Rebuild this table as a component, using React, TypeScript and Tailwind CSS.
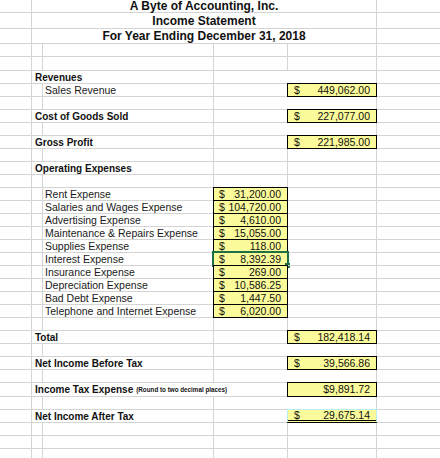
import clsx from 'clsx';

type Amount = { value: string; dollar?: boolean };

type SheetRow = {
  h?: number;
  label?: string;
  sub?: string;
  note?: string;
  d?: Amount;
  e?: Amount;
  selected?: boolean;
  final?: boolean;
  hideDE?: boolean;
};

const rows: SheetRow[] = [
  {},
  { h: 14 },
  { label: 'Revenues', hideDE: true },
  { sub: 'Sales Revenue', e: { value: '449,062.00' } },
  { hideDE: true },
  { label: 'Cost of Goods Sold', e: { value: '227,077.00' } },
  { hideDE: true },
  { label: 'Gross Profit', e: { value: '221,985.00' } },
  {},
  { label: 'Operating Expenses' },
  {},
  { sub: 'Rent Expense', d: { value: '31,200.00' } },
  { sub: 'Salaries and Wages Expense', d: { value: '104,720.00' } },
  { sub: 'Advertising Expense', d: { value: '4,610.00' } },
  { sub: 'Maintenance & Repairs Expense', d: { value: '15,055.00' } },
  { sub: 'Supplies Expense', d: { value: '118.00' } },
  { sub: 'Interest Expense', d: { value: '8,392.39' }, selected: true },
  { sub: 'Insurance Expense', d: { value: '269.00' } },
  { sub: 'Depreciation Expense', d: { value: '10,586.25' } },
  { sub: 'Bad Debt Expense', d: { value: '1,447.50' } },
  { sub: 'Telephone and Internet Expense', d: { value: '6,020.00' } },
  {},
  { label: 'Total', e: { value: '182,418.14' } },
  { hideDE: true },
  { label: 'Net Income Before Tax', e: { value: '39,566.86' } },
  { hideDE: true },
  {
    h: 14,
    label: 'Income Tax Expense',
    note: '(Round to two decimal places)',
    e: { value: '$9,891.72', dollar: false },
  },
  { hideDE: true },
  { label: 'Net Income After Tax', e: { value: '29,675.14' }, final: true },
  {},
  {},
  {},
];

const line = 'border-[#d4d4d4]';

const Money = ({ amount, className }: { amount: Amount; className: string }) => (
  <div className={clsx('flex h-full items-center text-[10.5px] leading-none text-[#111]', className)}>
    {amount.dollar !== false && <span>$</span>}
    <span className="ml-auto">{amount.value}</span>
  </div>
);

const TitleRow = ({ text, h, pad }: { text: string; h: string; pad: string }) => (
  <div className={clsx('flex', h)}>
    <div className={clsx('w-[32px] shrink-0 border-r border-b', line)} />
    <div
      className={clsx(
        'flex w-[345px] shrink-0 items-end justify-center border-r border-b text-[12px] leading-[12px] font-bold text-[#111]',
        line,
        pad,
      )}
    >
      {text}
    </div>
    <div className={clsx('flex-1 border-b', line)} />
  </div>
);

export default function App() {
  return (
    <div className="h-[458px] w-[440px] overflow-hidden bg-white font-['Liberation_Sans',Arial,sans-serif]">
      <TitleRow text="A Byte of Accounting, Inc." h="h-[13px]" pad="pb-0" />
      <TitleRow text="Income Statement" h="h-[16px]" pad="pb-[1px]" />
      <TitleRow text="For Year Ending December 31, 2018" h="h-[15px]" pad="pb-[1px]" />

      {rows.map((row, i) => {
        const hasB = !!row.label;
        return (
          <div key={i} className="flex" style={{ height: row.h ?? 13 }}>
            {/* A */}
            <div className={clsx('w-[32px] shrink-0 border-r border-b', line)} />

            {/* B */}
            <div
              className={clsx(
                'flex w-[11px] shrink-0 items-center border-b pl-[3px] whitespace-nowrap',
                line,
                !hasB && 'border-r',
              )}
            >
              {row.label && (
                <span className="pt-[1px] text-[10px] leading-none font-bold text-[#111]">
                  {row.label}
                  {row.note && (
                    <span className="ml-[3px] align-[1px] text-[6.3px]">{row.note}</span>
                  )}
                </span>
              )}
            </div>

            {/* C */}
            <div
              className={clsx(
                'flex w-[171px] shrink-0 items-center border-b pl-[2px] whitespace-nowrap',
                line,
                !row.note && 'border-r',
              )}
            >
              {row.sub && (
                <span className="pt-[1px] text-[10.5px] leading-none text-[#1a1a1a]">{row.sub}</span>
              )}
            </div>

            {/* D */}
            <div
              className={clsx('relative w-[74px] shrink-0 border-b', line, !row.hideDE && 'border-r')}
            >
              {row.d && (
                <div className="absolute -inset-px border border-black bg-[#fbfb9c]">
                  <Money amount={row.d} className="pr-[6px] pl-[5px]" />
                </div>
              )}
              {row.selected && (
                <>
                  <div className="absolute -inset-[2px] border-2 border-[#1d7044]" />
                  <div className="absolute -right-[3px] -bottom-[3px] h-[5px] w-[5px] bg-[#1d7044]" />
                </>
              )}
            </div>

            {/* E */}
            <div className={clsx('relative w-[89px] shrink-0 border-r border-b', line)}>
              {row.e && (
                <div
                  className={clsx(
                    'absolute -inset-px bg-[#fbfb9c]',
                    row.final
                      ? 'border-x border-t border-b-[3px] border-x-[#b8f0f0] border-t-[#b8f0f0] border-b-black'
                      : 'border border-black',
                  )}
                  style={row.final ? { borderStyle: 'solid solid double solid' } : undefined}
                >
                  <Money amount={row.e} className="pr-[6px] pl-[6px]" />
                </div>
              )}
            </div>

            {/* F */}
            <div className={clsx('flex-1 border-b', line)} />
          </div>
        );
      })}
    </div>
  );
}
